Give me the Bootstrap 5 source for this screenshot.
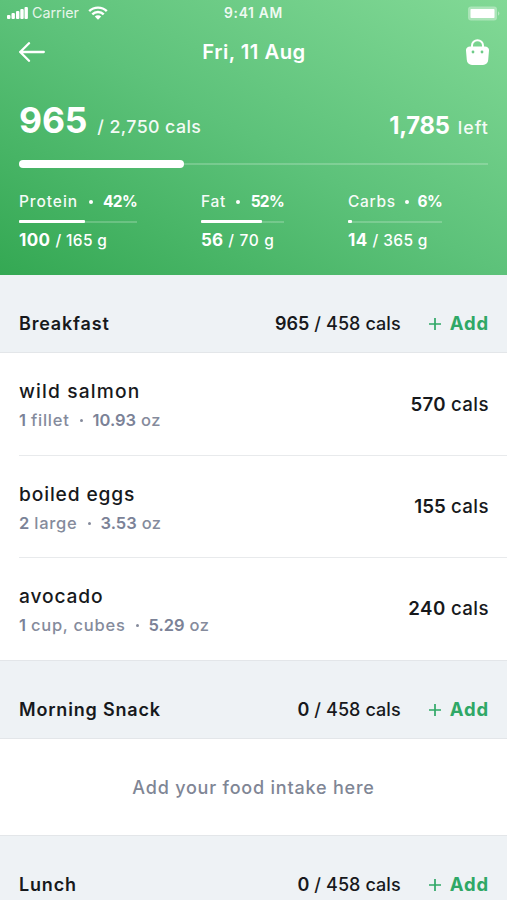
<!DOCTYPE html>
<html lang="en">
<head>
<meta charset="utf-8">
<meta name="viewport" content="width=device-width, initial-scale=1">
<title>Food diary</title>
<link href="https://cdn.jsdelivr.net/npm/bootstrap@5.3.0/dist/css/bootstrap.min.css" rel="stylesheet">
<style>
  body { font-family: Inter, "Open Sans", sans-serif; color: #17191c; background: #fff; height: 900px; overflow: hidden; }
  .semi { font-weight: 600; }
  .med { font-weight: 500; }
  .t1 { letter-spacing: .01em; }
  .t2 { letter-spacing: .023em; }
  .t4 { letter-spacing: .045em; }
  .t6 { letter-spacing: .06em; }
  .t-pct { letter-spacing: -.045em; }
  .hero { height: 275px; padding: 0 19px; background: linear-gradient(to top right, #34a853, #5dc27a 50%, #82d996); }
  .status { height: 26px; margin: 0 -12px; line-height: 26px; }
  .status svg, .topbar svg { display: block; }
  .carrier { font-size: 14.3px; opacity: .85; margin: 0 9px 0 4px; }
  .clock { font-size: 13.8px; letter-spacing: .05em; opacity: .9; }
  .topbar { height: 52px; }
  .topbar .title { font-size: 20.3px; line-height: 52px; padding-right: 3px; }
  .bag { margin-right: -1px; }
  .totals { height: 63px; line-height: 1; padding-bottom: 3px; }
  .eaten { font-size: 35.5px; letter-spacing: -.005em; margin-right: 10px; }
  .goal { font-size: 17.8px; opacity: .93; }
  .remain { font-size: 23.7px; letter-spacing: -.009em; margin-right: 8px; }
  .left-word { letter-spacing: .06em; margin-right: -1px; }
  .meter { background: linear-gradient(rgba(255,255,255,.2), rgba(255,255,255,.2)) center / 100% 2px no-repeat; }
  .meter > i { display: block; height: 3px; background: #fff; border-radius: 1px; }
  .meter-lg { height: 8px; margin-top: 19px; }
  .meter-lg > i { height: 8px; border-radius: 4px; }
  .macros { gap: 64px; margin-top: 22px; }
  .macro { line-height: 24px; font-size: 15.5px; white-space: nowrap; }
  .macro .meter { height: 3px; margin: 6px 0 5px; }
  .macro .name { opacity: .95; }
  .macro .amount { font-size: 17px; margin-right: 5px; }
  .dot { width: 4px; height: 4px; border-radius: 50%; background: currentColor; flex: none; }
  .protein { width: 118px; } .fat { width: 83px; } .carbs { width: 94px; }
  .meal-head { height: 78px; padding: 19px 19px 0; background: #eef2f5; border-bottom: 1px solid #e3e6e9; font-size: 18px; }
  .meal-head.ruled { height: 79px; border-top: 1px solid #e3e6e9; }
  .of { margin-left: 5px; letter-spacing: .005em; }
  .add { color: #2fa866; margin-left: 28px; gap: 9px; font-size: 18.5px; margin-right: -1px; padding-top: 1px; }
  .food { height: 102.5px; margin-left: 19px; padding: 2px 18px 0 0; border-bottom: 1px solid #e8eaec; }
  .food:last-child { height: 102px; border-bottom: 0; padding-top: 1px; }
  .food .what { font-size: 19.2px; line-height: 28px; letter-spacing: .045em; }
  .food .wide { letter-spacing: .06em; }
  .food .portion { font-size: 16.5px; line-height: 24px; color: #858b9c; margin-top: 3px; }
  .food .portion .semi { color: #7b8297; margin-right: 5px; }
  .food .dot { width: 3px; height: 3px; margin: 1px 10px 0 10px; }
  .food .kcal { font-size: 18.7px; }
  .empty { height: 96px; font-size: 18px; color: #7f8695; letter-spacing: .044em; }
</style>
<script src="https://cdn.jsdelivr.net/npm/bootstrap@5.3.0/dist/js/bootstrap.bundle.min.js"></script>
</head>
<body>
<header class="hero text-white">
  <div class="status d-flex align-items-center justify-content-between">
    <div class="d-flex align-items-center" style="flex:1">
      <svg width="21" height="12" viewBox="0 0 21 12" fill="#fff"><rect y="8" width="3.4" height="4" rx="1"/><rect x="4.5" y="6" width="3.4" height="6" rx="1"/><rect x="9" y="4" width="3.4" height="8" rx="1"/><rect x="13.3" y="2" width="3.4" height="10" rx="1"/><rect x="17.5" y="0" width="3.4" height="12" rx="1"/></svg>
      <span class="carrier">Carrier</span>
      <svg width="20" height="14" viewBox="0 0 20 14" fill="none" stroke="#fff" stroke-width="2.4"><path d="M1.2 5.2a12.5 12.5 0 0 1 17.6 0M4.3 8.4a8.1 8.1 0 0 1 11.4 0"/><path d="M10 13.8 6.8 10.6a4.5 4.5 0 0 1 6.4 0z" fill="#fff" stroke="none"/></svg>
    </div>
    <span class="clock semi">9:41 AM</span>
    <div class="d-flex justify-content-end" style="flex:1">
      <svg width="33" height="15" viewBox="0 0 33 15"><rect x="1" y=".5" width="29" height="14" rx="3" fill="#fff" opacity=".35"/><rect x="3.500" y="3" width="24" height="9" rx=".8" fill="#fff"/><path d="M31 5.2a2.600 2.600 0 0 1 0 4.600z" fill="#fff" opacity=".4"/></svg>
    </div>
  </div>
  <div class="topbar d-flex align-items-center justify-content-between">
    <svg width="26" height="20" viewBox="0 0 26 20" fill="none" stroke="#fff" stroke-width="2.3" stroke-linecap="round" stroke-linejoin="round"><path d="M24.8 10H1.2M10 1.2 1.2 10l8.8 8.8"/></svg>
    <span class="title semi t2">Fri, 11 Aug</span>
    <svg class="bag" width="23" height="26" viewBox="0 0 23 26"><path d="M6 8V6.4a5.5 5.2 0 0 1 11 0V8" fill="none" stroke="#fff" stroke-width="2"/><path d="M4 7.5h15c2.5 0 4.2 1.6 4 4l-.8 9.5a5.2 5.2 0 0 1-5.2 5H6a5.2 5.2 0 0 1-5.2-5L0 11.5c-.2-2.4 1.5-4 4-4z" fill="#fff"/><circle cx="7" cy="13" r="1.4" fill="#6ecb88"/><circle cx="16" cy="13" r="1.4" fill="#6ecb88"/></svg>
  </div>
  <div class="totals d-flex align-items-end justify-content-between">
    <div class="d-flex align-items-baseline"><span class="eaten fw-bold">965</span><span class="goal med t2">/ 2,750 cals</span></div>
    <div class="d-flex align-items-baseline"><span class="remain fw-bold">1,785</span><span class="goal med left-word">left</span></div>
  </div>
  <div class="meter meter-lg"><i style="width:35.2%"></i></div>
  <div class="macros d-flex">
    <div class="macro protein">
      <div class="d-flex justify-content-between align-items-center"><span class="name med t6">Protein</span><i class="dot"></i><span class="fw-bold t-pct">42%</span></div>
      <div class="meter"><i style="width:56%"></i></div>
      <div class="d-flex align-items-baseline"><span class="amount fw-bold t2">100</span><span class="med t2">/ 165 g</span></div>
    </div>
    <div class="macro fat">
      <div class="d-flex justify-content-between align-items-center"><span class="name med t4">Fat</span><i class="dot"></i><span class="fw-bold t-pct">52%</span></div>
      <div class="meter"><i style="width:73%"></i></div>
      <div class="d-flex align-items-baseline"><span class="amount fw-bold t1">56</span><span class="med t4">/ 70 g</span></div>
    </div>
    <div class="macro carbs">
      <div class="d-flex justify-content-between align-items-center"><span class="name med t4">Carbs</span><i class="dot"></i><span class="fw-bold t-pct">6%</span></div>
      <div class="meter"><i style="width:4%"></i></div>
      <div class="d-flex align-items-baseline"><span class="amount fw-bold t2">14</span><span class="med t2">/ 365 g</span></div>
    </div>
  </div>
</header>

<main>
  <section>
    <div class="meal-head d-flex align-items-center">
      <span class="semi t4 me-auto">Breakfast</span><span class="semi">965</span><span class="of med">/ 458 cals</span>
      <span class="add d-flex align-items-center fw-bold t4"><svg width="12" height="12" viewBox="0 0 12 12" stroke="currentColor" stroke-width="1.7"><path d="M6 0v12M0 6h12"/></svg>Add</span>
    </div>
    <div>
      <div class="food d-flex align-items-center justify-content-between">
        <div><div class="what med wide">wild salmon</div><div class="portion d-flex align-items-center"><span class="semi">1</span><span class="med t4">fillet</span><i class="dot"></i><span class="semi">10.93</span><span class="med t2">oz</span></div></div>
        <div class="kcal"><span class="semi t1">570</span> <span class="med t2">cals</span></div>
      </div>
      <div class="food d-flex align-items-center justify-content-between">
        <div><div class="what med">boiled eggs</div><div class="portion d-flex align-items-center"><span class="semi">2</span><span class="med t4">large</span><i class="dot"></i><span class="semi">3.53</span><span class="med t2">oz</span></div></div>
        <div class="kcal"><span class="semi">155</span> <span class="med t2">cals</span></div>
      </div>
      <div class="food d-flex align-items-center justify-content-between">
        <div><div class="what med">avocado</div><div class="portion d-flex align-items-center"><span class="semi">1</span><span class="med t4">cup, cubes</span><i class="dot"></i><span class="semi">5.29</span><span class="med t2">oz</span></div></div>
        <div class="kcal"><span class="semi t2">240</span> <span class="med t2">cals</span></div>
      </div>
    </div>
  </section>
  <section>
    <div class="meal-head ruled d-flex align-items-center">
      <span class="semi t4 me-auto">Morning Snack</span><span class="semi">0</span><span class="of med">/ 458 cals</span>
      <span class="add d-flex align-items-center fw-bold t4"><svg width="12" height="12" viewBox="0 0 12 12" stroke="currentColor" stroke-width="1.7"><path d="M6 0v12M0 6h12"/></svg>Add</span>
    </div>
    <div class="empty med d-flex align-items-center justify-content-center">Add your food intake here</div>
  </section>
  <section>
    <div class="meal-head ruled d-flex align-items-center">
      <span class="semi t4 me-auto">Lunch</span><span class="semi">0</span><span class="of med">/ 458 cals</span>
      <span class="add d-flex align-items-center fw-bold t4"><svg width="12" height="12" viewBox="0 0 12 12" stroke="currentColor" stroke-width="1.7"><path d="M6 0v12M0 6h12"/></svg>Add</span>
    </div>
  </section>
</main>
</body>
</html>
